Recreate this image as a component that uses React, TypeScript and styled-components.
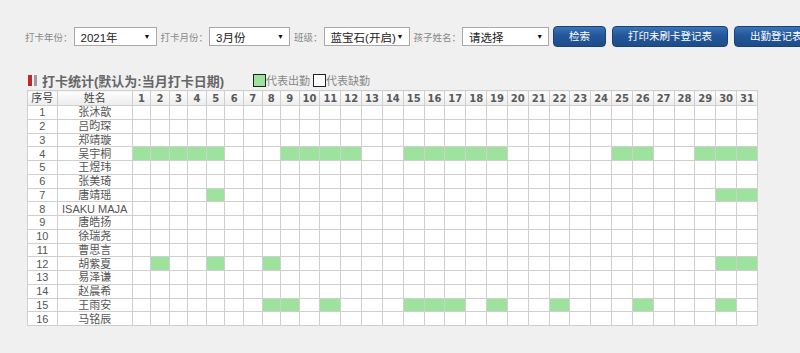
import React from "react";
import styled, { createGlobalStyle } from "styled-components";

const GlobalStyle = createGlobalStyle`
  body {
    margin: 0;
    background: #f0f0f0;
    font-family: "Liberation Sans", "Noto Sans CJK SC", sans-serif;
    overflow: hidden;
  }
`;

const Page = styled.div`
  padding: 26px 0 0 25px;
  width: 900px;
`;

const Toolbar = styled.div`
  display: flex;
  align-items: center;
  height: 21px;
  white-space: nowrap;
`;

const Label = styled.span`
  font-size: 9.5px;
  color: #888;
  margin-right: 1px;
`;

const SelectBox = styled.div<{ $w: number }>`
  box-sizing: border-box;
  width: ${(p) => p.$w}px;
  height: 19px;
  margin-right: 4px;
  padding: 0 5px 0 6px;
  display: flex;
  align-items: center;
  justify-content: space-between;
  background: #fff;
  border: 1px solid #a9a9a9;
  font-size: 11.5px;
  color: #222;

  .arrow {
    font-size: 7px;
    color: #111;
  }
`;

const Button = styled.button`
  height: 21px;
  margin-right: 6px;
  padding: 0 15px;
  border: 1px solid #1b4274;
  border-radius: 4px;
  background: linear-gradient(#3a74b8, #23579a 45%, #1d4c89);
  color: #fff;
  font-family: "Liberation Sans", "Noto Sans CJK SC", sans-serif;
  font-size: 10.5px;
  line-height: 19px;
  white-space: nowrap;
`;

const TitleRow = styled.div`
  display: flex;
  align-items: center;
  height: 16px;
  margin: 25px 0 2px 3px;
`;

const TitleMark = styled.span`
  display: flex;
  gap: 2px;
  margin-right: 5px;

  span:first-child {
    width: 4px;
    height: 11px;
    background: #c3262c;
  }
  span:last-child {
    width: 3px;
    height: 11px;
    background: #9a9a9a;
  }
`;

const Title = styled.span`
  font-size: 13px;
  font-weight: bold;
  color: #666;
  margin-right: 29px;
`;

const LegendBox = styled.span<{ $present?: boolean }>`
  box-sizing: border-box;
  width: 13px;
  height: 13px;
  background: ${(p) => (p.$present ? "#9de39d" : "#fff")};
  border: 1px solid #222;
`;

const LegendText = styled.span`
  font-size: 11px;
  color: #888;
  margin-right: 3px;
`;

const Table = styled.table`
  margin-left: 2px;
  width: 730px;
  table-layout: fixed;
  border-collapse: collapse;
  background: #fff;
  border: 1px solid #c6c6c6;
`;

const HeadCell = styled.th`
  height: 14px;
  padding: 0;
  border: 1px solid #cfcfcf;
  background: linear-gradient(#fdfdfd, #ececec);
  font-family: "DejaVu Sans", "Noto Sans CJK SC", sans-serif;
  font-size: 10px;
  font-weight: bold;
  color: #5a5a5a;
  text-align: center;
  line-height: 13px;

  &.cjk {
    font-family: "Liberation Sans", "Noto Sans CJK SC", sans-serif;
    font-weight: normal;
    font-size: 11px;
    color: #444;
  }
`;

const Cell = styled.td<{ $present?: boolean }>`
  height: 12.75px;
  padding: 0;
  border: 1px solid #cfcfcf;
  background: ${(p) => (p.$present ? "#9de39d" : "#fff")};
  font-size: 11px;
  color: #555;
  text-align: center;
  line-height: 12px;
  white-space: nowrap;
  overflow: hidden;
`;

const names = [
  "张沐歆",
  "吕昀琛",
  "郑靖璇",
  "吴宇桐",
  "王煜玮",
  "张美琦",
  "唐靖瑶",
  "ISAKU MAJA",
  "唐皓扬",
  "徐瑞尧",
  "曹思言",
  "胡紫夏",
  "易泽谦",
  "赵晨希",
  "王雨安",
  "马铭辰",
];

const attendance: Record<number, number[]> = {
  4: [1, 2, 3, 4, 5, 9, 10, 11, 12, 15, 16, 17, 18, 19, 25, 26, 29, 30, 31],
  7: [5, 30, 31],
  12: [2, 5, 8, 30, 31],
  15: [8, 9, 11, 15, 16, 17, 19, 22, 26, 30],
};

const days = Array.from({ length: 31 }, (_, i) => i + 1);

const selects = [
  { label: "打卡年份：", value: "2021年", w: 83 },
  { label: "打卡月份：", value: "3月份", w: 81 },
  { label: "班级：", value: "蓝宝石(开启)", w: 86 },
  { label: "孩子姓名：", value: "请选择", w: 87 },
];

const App: React.FC = () => {
  return (
    <Page>
      <GlobalStyle />
      <Toolbar>
        {selects.map((s) => (
          <React.Fragment key={s.label}>
            <Label>{s.label}</Label>
            <SelectBox $w={s.w}>
              <span>{s.value}</span>
              <span className="arrow">▼</span>
            </SelectBox>
          </React.Fragment>
        ))}
        <Button>检索</Button>
        <Button>打印未刷卡登记表</Button>
        <Button>出勤登记表</Button>
      </Toolbar>

      <TitleRow>
        <TitleMark>
          <span />
          <span />
        </TitleMark>
        <Title>打卡统计(默认为:当月打卡日期)</Title>
        <LegendBox $present />
        <LegendText>代表出勤</LegendText>
        <LegendBox />
        <LegendText>代表缺勤</LegendText>
      </TitleRow>

      <Table>
        <colgroup>
          <col style={{ width: 29.7 }} />
          <col style={{ width: 75 }} />
          {days.map((d) => (
            <col key={d} style={{ width: d < 10 ? 18.55 : 20.84 }} />
          ))}
        </colgroup>
        <thead>
          <tr>
            <HeadCell className="cjk">序号</HeadCell>
            <HeadCell className="cjk">姓名</HeadCell>
            {days.map((d) => (
              <HeadCell key={d}>{d}</HeadCell>
            ))}
          </tr>
        </thead>
        <tbody>
          {names.map((name, i) => {
            const present = attendance[i + 1] || [];
            return (
              <tr key={name}>
                <Cell>{i + 1}</Cell>
                <Cell>{name}</Cell>
                {days.map((d) => (
                  <Cell key={d} $present={present.includes(d)} />
                ))}
              </tr>
            );
          })}
        </tbody>
      </Table>
    </Page>
  );
};

export default App;
